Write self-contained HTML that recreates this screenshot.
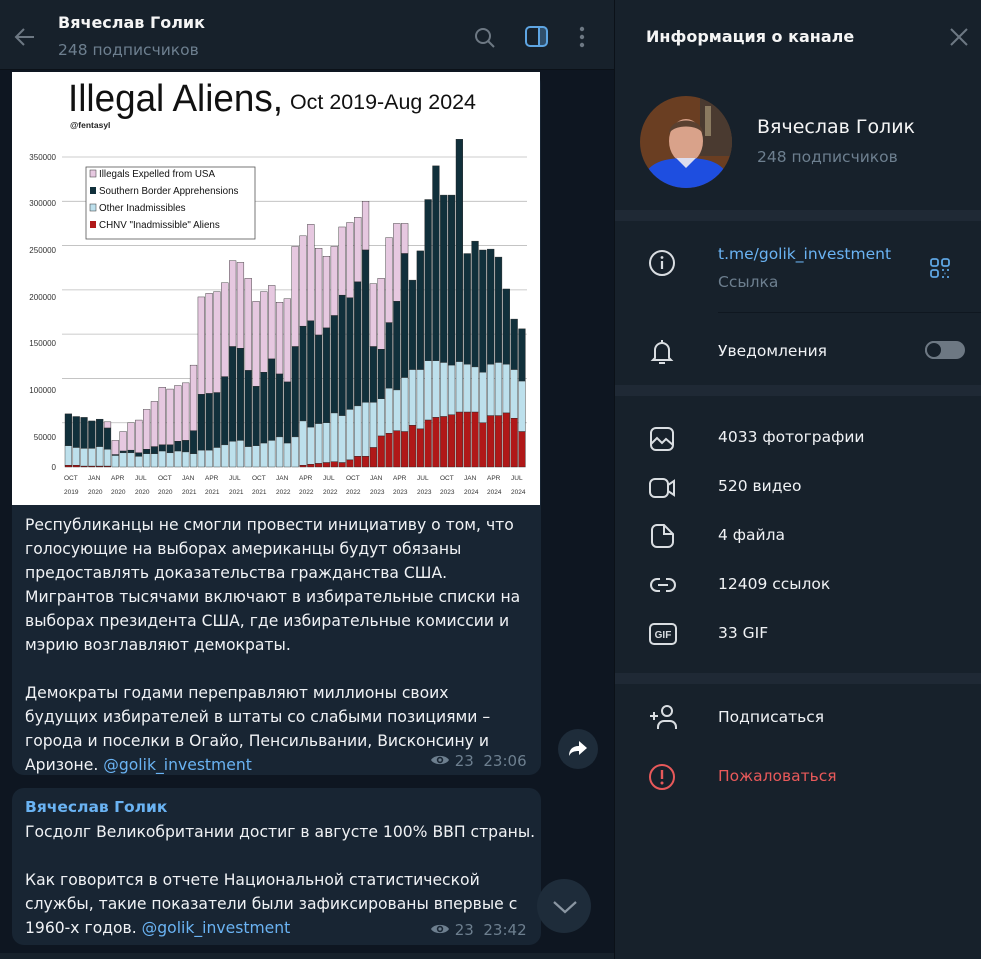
<!DOCTYPE html>
<html><head><meta charset="utf-8">
<style>
*{margin:0;padding:0;box-sizing:border-box}
body{width:981px;height:959px;background:#0e1621;font-family:"DejaVu Sans","Liberation Sans",sans-serif;position:relative;overflow:hidden;color:#f5f5f5}
.abs{position:absolute}
#hdr{left:0;top:0;width:614px;height:70px;background:#17212b;border-bottom:1px solid #0b1118}
#rp{left:614px;top:0;width:367px;height:959px;background:#17212b;border-left:1px solid #0b1118}
.band{position:absolute;left:0;width:367px;height:11px;background:#1f2935}
.bubble{position:absolute;left:12px;width:529px;background:#182533;border-radius:12px}
.txt{font-size:15.6px;line-height:24px;color:#f0f2f5;white-space:nowrap}
.blue{color:#6ab3f3}
.meta{position:absolute;font-size:15px;color:#6d7f8f;white-space:nowrap}
.row{position:absolute;left:103px;font-size:15.5px;color:#f0f2f5;white-space:nowrap}
.ic{position:absolute;left:33px}
</style></head><body>

<div id="hdr" class="abs">
 <svg class="abs" style="left:12px;top:25px" width="26" height="24" viewBox="0 0 26 24"><path d="M22 12H4M12 4L4 12l8 8" fill="none" stroke="#6d7883" stroke-width="2"/></svg>
 <div class="abs" style="left:58px;top:13px;font-size:16px;font-weight:bold;color:#f5f5f5">Вячеслав Голик</div>
 <div class="abs" style="left:58px;top:41px;font-size:15.5px;color:#6d7f8f">248 подписчиков</div>
 <svg class="abs" style="left:473px;top:26px" width="24" height="24" viewBox="0 0 24 24"><circle cx="10" cy="10" r="7" fill="none" stroke="#6d7883" stroke-width="2"/><path d="M15 15l6 6" stroke="#6d7883" stroke-width="2"/></svg>
 <svg class="abs" style="left:524px;top:25px" width="26" height="24" viewBox="0 0 26 24"><rect x="2" y="2" width="21" height="19" rx="4" fill="none" stroke="#5ea5e2" stroke-width="2"/><path d="M15 2v19" stroke="#5ea5e2" stroke-width="2"/><rect x="15" y="3" width="7" height="17" fill="#5ea5e2" opacity=".35"/></svg>
 <svg class="abs" style="left:576px;top:25px" width="12" height="24" viewBox="0 0 12 24"><circle cx="6" cy="4" r="2.2" fill="#6d7883"/><circle cx="6" cy="12" r="2.2" fill="#6d7883"/><circle cx="6" cy="20" r="2.2" fill="#6d7883"/></svg>
</div>

<div class="bubble" style="top:72px;height:703px"></div>
<div class="abs" style="left:12px;top:72px;width:528px;height:433px;background:#fff"></div>
<svg class="abs" id="ch" style="left:0;top:0" width="614" height="510" viewBox="0 0 614 510" font-family="Liberation Sans, Arial, sans-serif">
 <text x="68" y="111" font-size="38" fill="#111" textLength="215" lengthAdjust="spacingAndGlyphs">Illegal Aliens,</text>
 <text x="290" y="109" font-size="21" fill="#111" textLength="186" lengthAdjust="spacingAndGlyphs">Oct 2019-Aug 2024</text>
 <text x="70" y="128" font-size="8.5" font-weight="bold" fill="#222">@fentasyl</text>
 <g id="grid"></g>
 <g font-size="8" fill="#333" text-anchor="end">
  <text x="56" y="160">350000</text><text x="56" y="206">300000</text><text x="56" y="253">250000</text><text x="56" y="300">200000</text><text x="56" y="346">150000</text><text x="56" y="393">100000</text><text x="56" y="440">50000</text><text x="56" y="470">0</text>
 </g>
 <g id="bars"></g>
 <rect x="86" y="167" width="169" height="72" fill="#fff" stroke="#555" stroke-width=".8"/>
 <g font-size="9.8" fill="#111">
  <rect x="90" y="170" width="6" height="7" fill="#e6c8e0" stroke="#333" stroke-width=".5"/><text x="99" y="177">Illegals Expelled from USA</text>
  <rect x="90" y="187" width="6" height="7" fill="#11303b"/><text x="99" y="194">Southern Border Apprehensions</text>
  <rect x="90" y="204" width="6" height="7" fill="#bde0ec" stroke="#333" stroke-width=".5"/><text x="99" y="211">Other Inadmissibles</text>
  <rect x="90" y="221" width="6" height="7" fill="#b01818"/><text x="99" y="228">CHNV "Inadmissible" Aliens</text>
 </g>
 <g font-size="6.5" fill="#333">
  <text x="64" y="480">OCT</text><text x="64" y="494">2019</text>
  <text x="88" y="480">JAN</text><text x="88" y="494">2020</text>
  <text x="111" y="480">APR</text><text x="111" y="494">2020</text>
  <text x="135" y="480">JUL</text><text x="135" y="494">2020</text>
  <text x="158" y="480">OCT</text><text x="158" y="494">2020</text>
  <text x="182" y="480">JAN</text><text x="182" y="494">2021</text>
  <text x="205" y="480">APR</text><text x="205" y="494">2021</text>
  <text x="229" y="480">JUL</text><text x="229" y="494">2021</text>
  <text x="252" y="480">OCT</text><text x="252" y="494">2021</text>
  <text x="276" y="480">JAN</text><text x="276" y="494">2022</text>
  <text x="299" y="480">APR</text><text x="299" y="494">2022</text>
  <text x="323" y="480">JUL</text><text x="323" y="494">2022</text>
  <text x="346" y="480">OCT</text><text x="346" y="494">2022</text>
  <text x="370" y="480">JAN</text><text x="370" y="494">2023</text>
  <text x="393" y="480">APR</text><text x="393" y="494">2023</text>
  <text x="417" y="480">JUL</text><text x="417" y="494">2023</text>
  <text x="440" y="480">OCT</text><text x="440" y="494">2023</text>
  <text x="464" y="480">JAN</text><text x="464" y="494">2024</text>
  <text x="487" y="480">APR</text><text x="487" y="494">2024</text>
  <text x="511" y="480">JUL</text><text x="511" y="494">2024</text>
 </g>
</svg>
<script>
(function(){
var T=[60,57,56,52,54,51,30,40,50,53,65,74,90,88,92,95,115,192,196,198,208,233,231,213,187,198,205,186,190,249,261,274,247,238,249,271,276,282,300,207,213,259,275,275,211,244,302,340,307,307,370,241,255,245,246,237,201,167,156];
var S=[60,57,56,52,54,44,14,18,19,16,20,23,25,25,29,30,41,82,83,84,102,136,134,109,91,107,122,105,96,136,159,165,149,157,171,194,191,209,245,136,133,163,187,241,211];
var O=[24,22,21,21,23,20,13,16,16,12,15,15,18,16,18,17,15,19,19,22,25,29,30,23,24,27,30,34,27,34,52,45,49,50,61,58,65,69,73,73,77,89,87,101,110,110,120,120,118,115,119,116,113,107,116,118,116,110,97];
var R=[2,2,1,1,1,1,0,0,0,0,0,0,0,0,0,0,0,0,0,0,0,0,0,0,0,0,0,0,0,0,2,3,4,5,6,5,8,12,12,22,35,38,41,40,47,43,53,56,57,59,62,62,62,50,58,58,61,55,40];
var ns="http://www.w3.org/2000/svg",b=document.getElementById('bars'),g=document.getElementById('grid');
function r(p,x,y,w,h,f){var e=document.createElementNS(ns,'rect');e.setAttribute('x',x);e.setAttribute('y',y);e.setAttribute('width',w);e.setAttribute('height',Math.max(h,0));e.setAttribute('fill',f);e.setAttribute('stroke','#222');e.setAttribute('stroke-width','.4');p.appendChild(e);}
for(var k=1;k<=7;k++){var l=document.createElementNS(ns,'line');var y=467-k*50*0.8857;l.setAttribute('x1',62);l.setAttribute('x2',527);l.setAttribute('y1',y);l.setAttribute('y2',y);l.setAttribute('stroke','#bbb');l.setAttribute('stroke-width','.8');g.appendChild(l);}
var sc=0.8857;
for(var i=0;i<59;i++){var x=65+i*7.82,w=6.8,t=T[i],s=i<S.length?S[i]:t,o=O[i],rr=R[i];
 if(t>s)r(b,x,467-t*sc,w,(t-s)*sc,'#e6c8e0');
 r(b,x,467-s*sc,w,(s-o)*sc,'#11303b');
 r(b,x,467-o*sc,w,(o-rr)*sc,'#bde0ec');
 if(rr>0)r(b,x,467-rr*sc,w,rr*sc,'#b01818');}
})();
</script>

<div class="abs txt" style="left:25px;top:513px">Республиканцы не смогли провести инициативу о том, что<br>голосующие на выборах американцы будут обязаны<br>предоставлять доказательства гражданства США.<br>Мигрантов тысячами включают в избирательные списки на<br>выборах президента США, где избирательные комиссии и<br>мэрию возглавляют демократы.<br><br>Демократы годами переправляют миллионы своих<br>будущих избирателей в штаты со слабыми позициями –<br>города и поселки в Огайо, Пенсильвании, Висконсину и<br>Аризоне. <span class="blue">@golik_investment</span></div>
<div class="meta" style="left:430px;top:752px"><svg width="20" height="14" viewBox="0 0 20 14" style="vertical-align:-1px"><path d="M1 7C4 1.5 16 1.5 19 7 16 12.5 4 12.5 1 7z" fill="#6d7f8f"/><circle cx="10" cy="7" r="3.2" fill="#182533"/><circle cx="10" cy="7" r="1.6" fill="#6d7f8f"/></svg> 23&nbsp;&nbsp;23:06</div>
<div class="abs" style="left:558px;top:729px;width:40px;height:40px;border-radius:50%;background:#1e2c3a"></div>
<svg class="abs" style="left:567px;top:739px" width="22" height="20" viewBox="0 0 22 20"><path d="M12 2l8 7-8 7v-4C7 12 4 13 2 17c0-6 3-10 10-10z" fill="#fff"/></svg>

<div class="bubble" style="top:788px;height:157px"></div>
<div class="abs" style="left:25px;top:798px;font-size:15.5px;font-weight:bold;color:#6ab3f3">Вячеслав Голик</div>
<div class="abs txt" style="left:25px;top:820px">Госдолг Великобритании достиг в августе 100% ВВП страны.<br><br>Как говорится в отчете Национальной статистической<br>службы, такие показатели были зафиксированы впервые с<br>1960-х годов. <span class="blue">@golik_investment</span></div>
<div class="meta" style="left:430px;top:921px"><svg width="20" height="14" viewBox="0 0 20 14" style="vertical-align:-1px"><path d="M1 7C4 1.5 16 1.5 19 7 16 12.5 4 12.5 1 7z" fill="#6d7f8f"/><circle cx="10" cy="7" r="3.2" fill="#182533"/><circle cx="10" cy="7" r="1.6" fill="#6d7f8f"/></svg> 23&nbsp;&nbsp;23:42</div>
<div class="abs" style="left:537px;top:879px;width:54px;height:54px;border-radius:50%;background:#1e2c3a"></div>
<svg class="abs" style="left:552px;top:899px" width="26" height="16" viewBox="0 0 26 16"><path d="M2 3l11 10L24 3" fill="none" stroke="#8a96a2" stroke-width="2.2"/></svg>
<div class="abs" style="left:0;top:953px;width:614px;height:6px;background:#17212b"></div>

<div id="rp" class="abs">
 <div class="abs" style="left:31px;top:27px;font-size:16px;font-weight:bold;color:#f5f5f5">Информация о канале</div>
 <svg class="abs" style="left:334px;top:27px" width="20" height="20" viewBox="0 0 20 20"><path d="M2 2l16 16M18 2L2 18" stroke="#6d7883" stroke-width="2"/></svg>
 <svg class="abs" style="left:25px;top:96px" width="92" height="92" viewBox="0 0 92 92"><defs><clipPath id="c"><circle cx="46" cy="46" r="46"/></clipPath></defs><g clip-path="url(#c)"><rect width="92" height="92" fill="#6a3e22"/><rect x="60" y="0" width="32" height="60" fill="#4a3a30"/><rect x="65" y="10" width="6" height="30" fill="#8a7a60"/><ellipse cx="46" cy="45" rx="17" ry="22" fill="#d9a28a"/><path d="M29 38c0-18 34-18 34 0-4-10-30-10-34 0z" fill="#5a4030"/><path d="M0 92c4-24 20-30 46-30s42 6 46 30z" fill="#1e4ee0"/><path d="M36 62l10 10 10-10z" fill="#dde"/></g></svg>
 <div class="abs" style="left:142px;top:116px;font-size:19px;color:#f5f5f5">Вячеслав Голик</div>
 <div class="abs" style="left:142px;top:148px;font-size:15.5px;color:#6d7f8f">248 подписчиков</div>
 <div class="band" style="top:210px"></div>
 <svg class="ic" style="top:249px" width="28" height="28" viewBox="0 0 28 28"><circle cx="14" cy="14" r="12" fill="none" stroke="#d9dde1" stroke-width="2"/><path d="M14 12v8" stroke="#d9dde1" stroke-width="2.2"/><circle cx="14" cy="8.5" r="1.4" fill="#d9dde1"/></svg>
 <div class="row" style="top:245px;color:#6ab3f3">t.me/golik_investment</div>
 <div class="row" style="top:273px;color:#6d7f8f">Ссылка</div>
 <svg class="abs" style="left:314px;top:257px" width="22" height="22" viewBox="0 0 22 22" fill="none" stroke="#5ea5e2" stroke-width="1.8"><rect x="2" y="2" width="7" height="7" rx="2"/><rect x="13" y="2" width="7" height="7" rx="2"/><rect x="2" y="13" width="7" height="7" rx="2"/><path d="M13 13h2M18 13h2M15.5 16.5h1M13 20h2M18 20h2"/></svg>
 <div class="abs" style="left:103px;top:312px;width:264px;height:1px;background:#0f1720"></div>
 <svg class="ic" style="top:338px" width="28" height="28" viewBox="0 0 28 28" fill="none" stroke="#d9dde1" stroke-width="2"><path d="M7 20V12a7 7 0 0 1 14 0v8l2 2H5z"/><path d="M14 2v3M11 25h6"/></svg>
 <div class="row" style="top:342px">Уведомления</div>
 <div class="abs" style="left:310px;top:341px;width:40px;height:18px;border-radius:9px;background:#6d7883"></div>
 <div class="abs" style="left:310px;top:341px;width:18px;height:18px;border-radius:50%;background:#17212b;border:2px solid #6d7883"></div>
 <div class="band" style="top:385px"></div>
 <svg class="ic" style="top:425px" width="28" height="28" viewBox="0 0 28 28" fill="none" stroke="#d9dde1" stroke-width="2"><rect x="3" y="3" width="22" height="22" rx="5"/><path d="M3 19l6-6 5 5 4-4 7 6"/></svg>
 <div class="row" style="top:428px">4033 фотографии</div>
 <svg class="ic" style="top:474px" width="30" height="28" viewBox="0 0 30 28" fill="none" stroke="#d9dde1" stroke-width="2"><rect x="2" y="5" width="18" height="18" rx="5"/><path d="M20 11l6-4v14l-6-4"/></svg>
 <div class="row" style="top:477px">520 видео</div>
 <svg class="ic" style="top:522px" width="28" height="28" viewBox="0 0 28 28" fill="none" stroke="#d9dde1" stroke-width="2"><path d="M9 3h7l9 9v8a5 5 0 0 1-5 5H9a5 5 0 0 1-5-5V8a5 5 0 0 1 5-5zM16 3v9h9"/></svg>
 <div class="row" style="top:526px">4 файла</div>
 <svg class="ic" style="top:571px" width="30" height="28" viewBox="0 0 30 28" fill="none" stroke="#d9dde1" stroke-width="2"><path d="M12 8H9a6 6 0 0 0 0 12h3M18 8h3a6 6 0 0 1 0 12h-3M10 14h10"/></svg>
 <div class="row" style="top:575px">12409 ссылок</div>
 <svg class="ic" style="top:620px" width="30" height="28" viewBox="0 0 30 28"><rect x="2" y="4" width="26" height="20" rx="4" fill="none" stroke="#d9dde1" stroke-width="2"/><text x="15" y="18" font-size="10" font-weight="bold" fill="#d9dde1" text-anchor="middle" font-family="Liberation Sans,sans-serif">GIF</text></svg>
 <div class="row" style="top:624px">33 GIF</div>
 <div class="band" style="top:673px"></div>
 <svg class="ic" style="top:703px" width="32" height="28" viewBox="0 0 32 28" fill="none" stroke="#d9dde1" stroke-width="2"><circle cx="19" cy="8" r="5"/><path d="M10 26v-2a6 6 0 0 1 6-6h6a6 6 0 0 1 6 6v2M2 13h8M6 9v8"/></svg>
 <div class="row" style="top:708px">Подписаться</div>
 <svg class="ic" style="top:763px" width="28" height="28" viewBox="0 0 28 28"><circle cx="14" cy="14" r="12" fill="none" stroke="#e8595a" stroke-width="2"/><path d="M14 7v9" stroke="#e8595a" stroke-width="2.4"/><circle cx="14" cy="20" r="1.5" fill="#e8595a"/></svg>
 <div class="row" style="top:767px;color:#e8595a">Пожаловаться</div>
</div>
</body></html>
